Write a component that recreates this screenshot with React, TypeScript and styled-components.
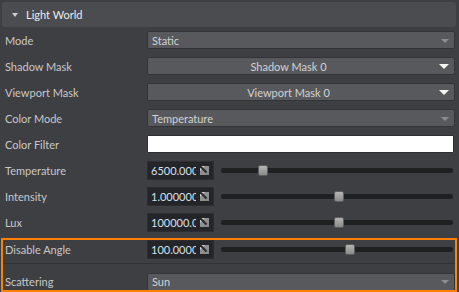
import React from "react";
import styled, { createGlobalStyle } from "styled-components";

const GlobalStyle = createGlobalStyle`
  html, body { margin: 0; padding: 0; }
  body {
    background: #3e3f43;
    font-family: Lato, "Open Sans", "Liberation Sans", sans-serif;
    font-size: 11px;
    color: #c9c9c9;
  }
`;

const Panel = styled.div`
  width: 459px;
  height: 292px;
  overflow: hidden;
  padding-top: 2px;
  box-sizing: border-box;
`;

const Header = styled.div`
  height: 25px;
  margin: 0 3px 0 2px;
  background: #4b4c50;
  border-radius: 3px;
  display: flex;
  align-items: center;
  padding-left: 10px;
  gap: 8px;
  color: #ececec;
`;

const Caret = styled.span`
  width: 0;
  height: 0;
  border-left: 3.5px solid transparent;
  border-right: 3.5px solid transparent;
  border-top: 4px solid #cfcfcf;
`;

const Rows = styled.div`
  display: flex;
  flex-direction: column;
  padding: 0 4px 0 5px;
`;

const Row = styled.div<{ $h?: number }>`
  display: grid;
  grid-template-columns: 142px 1fr;
  align-items: center;
  flex-shrink: 0;
  height: ${(p) => p.$h ?? 26}px;
`;

const Label = styled.div`
  white-space: nowrap;
  color: #c8c8c8;
`;

const Combo = styled.div`
  height: 18px;
  box-sizing: border-box;
  background: #58595d;
  border: 1px solid #333438;
  border-radius: 2px;
  display: flex;
  align-items: center;
  padding: 0 5px 0 4px;
  color: #d2d2d2;
`;

const ComboText = styled.span<{ $center?: boolean }>`
  flex: 1;
  text-align: ${(p) => (p.$center ? "center" : "left")};
  padding-right: ${(p) => (p.$center ? "14px" : "0")};
`;

const Arrow = styled.span<{ $bright?: boolean }>`
  width: 0;
  height: 0;
  border-left: ${(p) => (p.$bright ? 5 : 4)}px solid transparent;
  border-right: ${(p) => (p.$bright ? 5 : 4)}px solid transparent;
  border-top: ${(p) => (p.$bright ? 5 : 4)}px solid ${(p) => (p.$bright ? "#f4f4f4" : "#8c8d90")};
  margin-top: 1px;
`;

const ColorSwatch = styled.div`
  height: 18px;
  box-sizing: border-box;
  background: #ffffff;
  border: 1px solid #2e2f33;
  border-radius: 1px;
  margin-right: 1px;
`;

const SliderLine = styled.div`
  display: flex;
  align-items: center;
  gap: 7px;
`;

const NumField = styled.div`
  width: 67px;
  height: 19px;
  box-sizing: border-box;
  background: #242528;
  border: 1px solid #2c2d30;
  display: flex;
  align-items: center;
  padding: 0 4px 0 3px;
  gap: 4px;
`;

const NumText = styled.span`
  flex: 1;
  overflow: hidden;
  white-space: nowrap;
  color: #d6e2ee;
`;

const Track = styled.div`
  flex: 1;
  height: 5px;
  margin-right: 2px;
  background: #1f2022;
  border-radius: 2px;
  position: relative;
`;

const Handle = styled.div`
  position: absolute;
  top: -3px;
  width: 10px;
  height: 11px;
  box-sizing: border-box;
  border-radius: 2px;
  background: linear-gradient(#b4b4b4, #8a8a8a);
  border: 1px solid #5e5e5e;
`;

const Group = styled.div`
  margin: 5px 4px 0 3px;
  outline: 2px solid #ff7f00;
  padding-left: 2px;
  height: 50px;
`;

const Separator = styled.div`
  height: 1px;
  background: #323337;
  margin: 5px -2px 8px -2px;
`;

const ExpandIcon = () => (
  <svg width="9" height="9" viewBox="0 0 9 9">
    <rect x="0" y="0" width="9" height="9" fill="#8f8f8f" />
    <polygon points="0,0 5,0 0,5" fill="#d0d0d0" />
    <polygon points="1.5,0 9,7.5 9,9 7.5,9 0,1.5 0,0" fill="#2a2b2e" />
    <polygon points="9,9 9,4 4,9" fill="#8a8a8a" />
  </svg>
);

const Slider = ({ value, pos }: { value: string; pos: number }) => (
  <SliderLine>
    <NumField>
      <NumText>{value}</NumText>
      <ExpandIcon />
    </NumField>
    <Track>
      <Handle style={{ left: `calc(${pos * 100}% - ${pos * 10}px)` }} />
    </Track>
  </SliderLine>
);

export default function App() {
  return (
    <>
      <GlobalStyle />
      <Panel>
        <Header>
          <Caret />
          <span>Light World</span>
        </Header>
        <Rows>
          <Row>
            <Label>Mode</Label>
            <Combo>
              <ComboText>Static</ComboText>
              <Arrow />
            </Combo>
          </Row>
          <Row>
            <Label>Shadow Mask</Label>
            <Combo>
              <ComboText $center>Shadow Mask 0</ComboText>
              <Arrow $bright />
            </Combo>
          </Row>
          <Row>
            <Label>Viewport Mask</Label>
            <Combo>
              <ComboText $center>Viewport Mask 0</ComboText>
              <Arrow $bright />
            </Combo>
          </Row>
          <Row>
            <Label>Color Mode</Label>
            <Combo>
              <ComboText>Temperature</ComboText>
              <Arrow />
            </Combo>
          </Row>
          <Row>
            <Label>Color Filter</Label>
            <ColorSwatch />
          </Row>
          <Row>
            <Label>Temperature</Label>
            <Slider value="6500.000000" pos={0.167} />
          </Row>
          <Row>
            <Label>Intensity</Label>
            <Slider value="1.000000" pos={0.509} />
          </Row>
          <Row>
            <Label>Lux</Label>
            <Slider value="100000.000000" pos={0.509} />
          </Row>
        </Rows>
        <Group>
          <Row $h={18}>
            <Label>Disable Angle</Label>
            <Slider value="100.000000" pos={0.56} />
          </Row>
          <Separator />
          <Row $h={19}>
            <Label>Scattering</Label>
            <Combo>
              <ComboText>Sun</ComboText>
              <Arrow />
            </Combo>
          </Row>
        </Group>
      </Panel>
    </>
  );
}
